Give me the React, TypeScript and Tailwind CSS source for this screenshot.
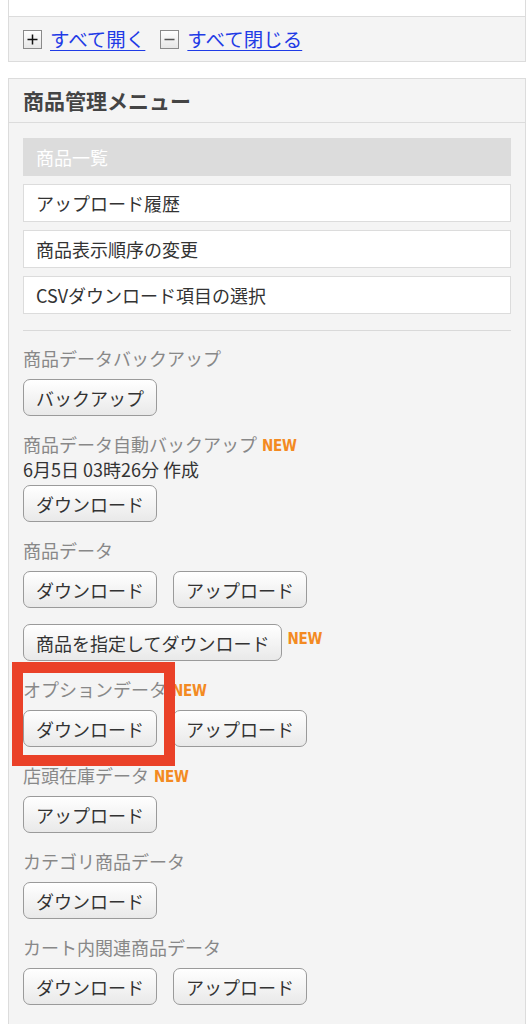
import React from 'react';

const NewMark = ({ className = '' }: { className?: string }) => (
  <span
    className={`font-['DejaVu_Sans_Condensed',sans-serif] font-bold text-[15px] leading-none text-[#f38a22] tracking-[-0.3px] scale-y-110 inline-block ${className}`}
  >
    NEW
  </span>
);

const Btn = ({ children }: { children: React.ReactNode }) => (
  <button
    type="button"
    className="h-[37px] px-3 rounded-[7px] border border-[#9a9a9a] bg-linear-to-b from-white to-[#e9e9e9] text-[18px] leading-none text-[#333] whitespace-nowrap"
  >
    {children}
  </button>
);

type Section = {
  label: string;
  isNew?: boolean;
  note?: string;
  buttons: string[];
  extra?: string;
};

const sections: Section[] = [
  { label: '商品データバックアップ', buttons: ['バックアップ'] },
  { label: '商品データ自動バックアップ', isNew: true, note: '6月5日 03時26分 作成', buttons: ['ダウンロード'] },
  { label: '商品データ', buttons: ['ダウンロード', 'アップロード'], extra: '商品を指定してダウンロード' },
  { label: 'オプションデータ', isNew: true, buttons: ['ダウンロード', 'アップロード'] },
  { label: '店頭在庫データ', isNew: true, buttons: ['アップロード'] },
  { label: 'カテゴリ商品データ', buttons: ['ダウンロード'] },
  { label: 'カート内関連商品データ', buttons: ['ダウンロード', 'アップロード'] },
];

const menuItems = ['アップロード履歴', '商品表示順序の変更', 'CSVダウンロード項目の選択'];

const PlusMinus = ({ minus }: { minus?: boolean }) => (
  <span className="w-[19px] h-[19px] border border-[#8a8a8a] bg-linear-to-b from-white to-[#e6e6e6] flex items-center justify-center shrink-0">
    <svg width="13" height="13" viewBox="0 0 13 13">
      <rect x="1.5" y="5.75" width="10" height="1.5" fill={minus ? '#555' : '#111'} />
      {!minus && <rect x="5.75" y="1.5" width="1.5" height="10" fill="#111" />}
    </svg>
  </span>
);

export default function App() {
  return (
    <div className="relative min-h-screen bg-white font-['Noto_Sans_CJK_JP',sans-serif] overflow-hidden">
      {/* top panel (cut off) */}
      <div className="ml-[8px] w-[518px] border-x border-b border-[#dcdcdc]">
        <div className="h-[17px] bg-white border-b border-[#dcdcdc]" />
        <div className="h-[44px] bg-[#f4f4f4] flex items-center pl-[14px] gap-[8px] text-[19.5px] leading-none">
          <PlusMinus />
          <a href="#" className="text-[#1f3be6] underline underline-offset-[3px] mr-[7px]">すべて開く</a>
          <PlusMinus minus />
          <a href="#" className="text-[#1f3be6] underline underline-offset-[3px]">すべて閉じる</a>
        </div>
      </div>

      {/* product menu */}
      <div className="ml-[8px] w-[518px] mt-[16px] border border-[#dcdcdc]">
        <div className="h-[44px] bg-[#f4f4f4] border-b border-[#dcdcdc] flex items-center pl-[14px]">
          <h2 className="text-[21px] font-bold text-[#444] leading-none">商品管理メニュー</h2>
        </div>
        <div className="bg-[#f4f4f4] px-[14px] pt-[15px] pb-[40px]">
          <div className="flex flex-col gap-2">
            <div className="h-[38px] bg-[#dcdcdc] flex items-center px-[13px] text-[18px] text-white">商品一覧</div>
            {menuItems.map((m) => (
              <div key={m} className="h-[38px] bg-white border border-[#dcdcdc] flex items-center px-[12px] text-[18px] text-[#333]">
                {m}
              </div>
            ))}
          </div>
          <div className="mt-4 h-px bg-[#d9d9d9]" />

          <div className="mt-[15px] flex flex-col gap-[16px]">
            {sections.map((s) => (
              <div key={s.label}>
                <div className="h-[24px] flex items-center text-[18px] leading-[24px] text-[#888]">
                  <span>{s.label}</span>
                  {s.isNew && <NewMark className="ml-[5px] mt-[5px]" />}
                </div>
                {s.note && <div className="mt-px text-[18px] leading-[24px] text-[#333]">{s.note}</div>}
                <div className={`${s.note ? 'mt-[4px]' : 'mt-[9px]'} flex gap-4`}>
                  {s.buttons.map((b) => (
                    <Btn key={b}>{b}</Btn>
                  ))}
                </div>
                {s.extra && (
                  <div className="mt-4 flex items-start gap-[5px]">
                    <Btn>{s.extra}</Btn>
                    <NewMark className="mt-[8px]" />
                  </div>
                )}
              </div>
            ))}
          </div>
        </div>
      </div>

      {/* annotation frame */}
      <div className="absolute left-[12px] top-[662px] w-[163px] h-[104px] border-[11px] border-[#ea4128] pointer-events-none" />
    </div>
  );
}
